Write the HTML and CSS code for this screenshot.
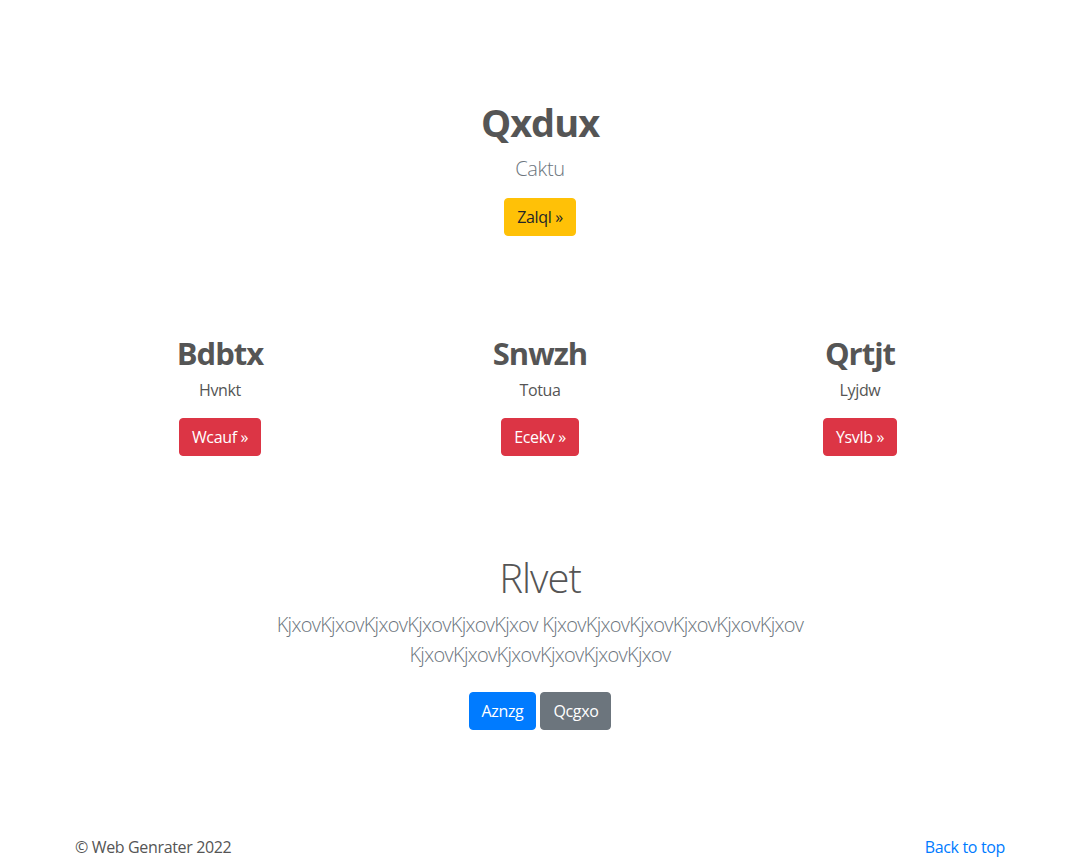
FILE: index.html
```html
<!DOCTYPE html>
<html lang="en">
<head>
<meta charset="utf-8">
<title>Qxdux</title>
<link rel="stylesheet" href="styles.css">
</head>
<body>
<main class="page">
  <section class="hero">
    <h1 class="hero-title">Qxdux</h1>
    <p class="lead">Caktu</p>
    <a class="btn btn-warning" href="#">Zalql &raquo;</a>
  </section>

  <section class="features">
    <div class="feature">
      <h2 class="feature-title">Bdbtx</h2>
      <p class="feature-text">Hvnkt</p>
      <a class="btn btn-danger" href="#">Wcauf &raquo;</a>
    </div>
    <div class="feature">
      <h2 class="feature-title">Snwzh</h2>
      <p class="feature-text">Totua</p>
      <a class="btn btn-danger" href="#">Ecekv &raquo;</a>
    </div>
    <div class="feature">
      <h2 class="feature-title">Qrtjt</h2>
      <p class="feature-text">Lyjdw</p>
      <a class="btn btn-danger" href="#">Ysvlb &raquo;</a>
    </div>
  </section>

  <section class="outro">
    <h1 class="outro-title">Rlvet</h1>
    <p class="lead muted outro-text">KjxovKjxovKjxovKjxovKjxovKjxov KjxovKjxovKjxovKjxovKjxovKjxov KjxovKjxovKjxovKjxovKjxovKjxov</p>
    <div class="btn-row">
      <a class="btn btn-primary" href="#">Aznzg</a>
      <a class="btn btn-secondary" href="#">Qcgxo</a>
    </div>
  </section>
</main>
<footer class="footer">
  <p class="copy">&copy; Web Genrater 2022</p>
  <a class="top-link" href="#">Back to top</a>
</footer>
</body>
</html>
```

FILE: styles.css
```css
* { box-sizing: border-box; }

html, body { margin: 0; padding: 0; }

body {
  font-family: "Open Sans", "Noto Sans", sans-serif;
  font-size: 16px;
  line-height: 1.5;
  letter-spacing: -0.35px;
  color: #555;
  background: #fff;
}

.page {
  width: 960px;
  margin: 0 auto;
  padding: 0 15px;
}

h1, h2, p { margin: 0; }

.hero {
  display: flex;
  flex-direction: column;
  align-items: center;
  padding-top: 98px;
}

.hero-title {
  font-size: 38px;
  line-height: 48px;
  font-weight: 700;
  letter-spacing: -1px;
  margin-bottom: 8px;
}

.lead {
  font-size: 20px;
  line-height: 30px;
  font-weight: 300;
  color: #6c757d;
}

.hero .lead { margin-bottom: 14px; }

.btn {
  display: inline-block;
  font-size: 16px;
  line-height: 24px;
  padding: 6px 12px;
  border: 1px solid transparent;
  border-radius: 4px;
  text-decoration: none;
  white-space: nowrap;
}

.btn-warning { background: #ffc107; border-color: #ffc107; color: #212529; }
.btn-danger { background: #dc3545; border-color: #dc3545; color: #fff; }
.btn-primary { background: #007bff; border-color: #007bff; color: #fff; }
.btn-secondary { background: #6c757d; border-color: #6c757d; color: #fff; }

.features {
  display: grid;
  grid-template-columns: repeat(3, 1fr);
  margin: 98px -15px 0;
}

.feature {
  display: flex;
  flex-direction: column;
  align-items: center;
  padding: 0 15px;
}

.feature-title {
  font-size: 31px;
  line-height: 38px;
  font-weight: 700;
  letter-spacing: -1px;
  margin-bottom: 6px;
}

.feature-text {
  margin-bottom: 16px;
}

.outro {
  display: flex;
  flex-direction: column;
  align-items: center;
  margin-top: 98px;
}

.outro-title {
  font-size: 40px;
  line-height: 48px;
  font-weight: 300;
  letter-spacing: -1px;
  margin-bottom: 8px;
}

.outro-text {
  max-width: 610px;
  text-align: center;
  letter-spacing: -0.7px;
  margin-bottom: 22px;
}

.btn-row {
  display: flex;
  gap: 4px;
}

.footer {
  width: 960px;
  margin: 0 auto;
  padding: 0 15px;
  display: flex;
  justify-content: space-between;
  align-items: center;
  margin-top: 105px;
  padding-bottom: 40px;
}

.top-link {
  color: #007bff;
  text-decoration: none;
}
```
